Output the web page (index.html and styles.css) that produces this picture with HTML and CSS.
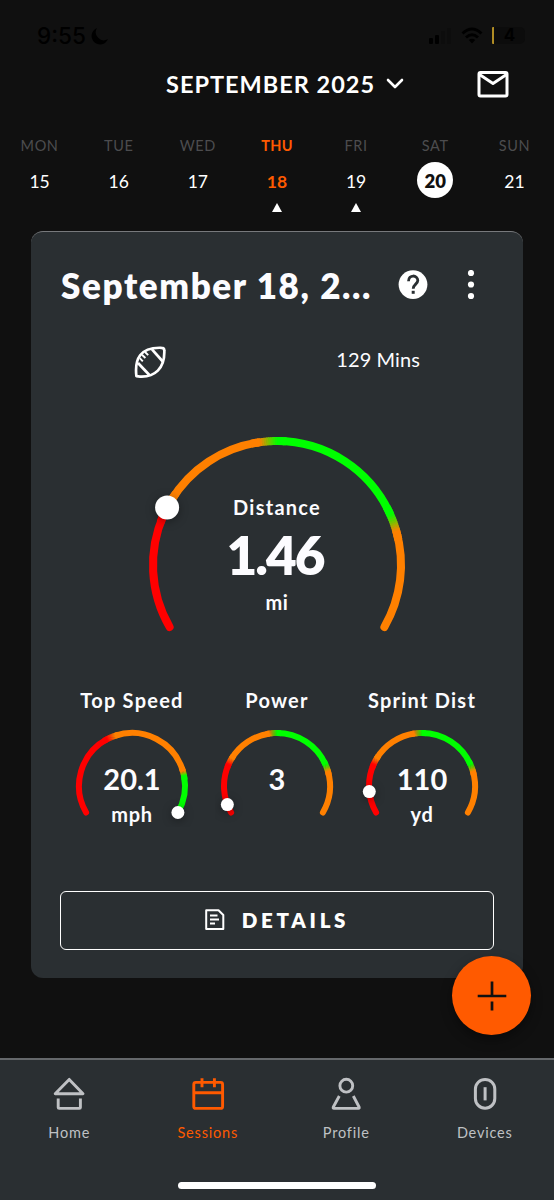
FILE: index.html
```html
<!DOCTYPE html>
<html lang="en">
<head>
    <meta charset="UTF-8">
    <meta name="viewport" content="width=device-width, initial-scale=1.0">
    <title>Sessions</title>
    <link rel="stylesheet" href="styles.css">
</head>
<body>
    <div class="status">
        <div class="status_time">
            <span>9:55</span>
            <svg width="18" height="18" viewBox="0 0 18 18"><path d="M6 1 A8.5 8.5 0 1 0 17 12 A8 8 0 0 1 6 1Z" fill="#000"/></svg>
        </div>
        <div class="status_icons">
            <svg width="24" height="18" viewBox="0 0 24 18">
                <rect x="1" y="11" width="4" height="6" rx="1" fill="#000"/>
                <rect x="7" y="8" width="4" height="9" rx="1" fill="#000"/>
                <rect x="13" y="4" width="4" height="13" rx="1" fill="#0d0d0d"/>
                <rect x="19" y="1" width="4" height="16" rx="1" fill="#0d0d0d"/>
            </svg>
            <svg width="22" height="17" viewBox="0 0 22 17" fill="none" stroke="#000" stroke-width="3">
                <path d="M1.5 6.5 Q11 -2.5 20.5 6.5"/>
                <path d="M5 10.5 Q11 5 17 10.5"/>
                <path d="M11 16.5 L7.8 13 Q11 10.5 14.2 13Z" fill="#000" stroke="none"/>
            </svg>
            <div class="battery">4</div>
        </div>
    </div>

    <div class="top">
        <div class="month">
            <span>SEPTEMBER 2025</span>
            <svg width="18" height="12" viewBox="0 0 18 12" fill="none" stroke="#fff" stroke-width="2.6" stroke-linecap="round" stroke-linejoin="round"><path d="M2 2 L9 9 L16 2"/></svg>
        </div>
        <svg class="mail" width="32" height="28" viewBox="0 0 32 28" fill="none" stroke="#fff" stroke-width="3" stroke-linejoin="round">
            <rect x="2" y="2.5" width="28" height="23.5" rx="1.5"/>
            <path d="M2.5 4.5 L16 13.5 L29.5 4.5"/>
        </svg>
    </div>

    <div class="week">
        <div class="day"><span class="name">MON</span><span class="num">15</span></div>
        <div class="day"><span class="name">TUE</span><span class="num">16</span></div>
        <div class="day"><span class="name">WED</span><span class="num">17</span></div>
        <div class="day on"><span class="name">THU</span><span class="num">18</span><i class="mark"></i></div>
        <div class="day"><span class="name">FRI</span><span class="num">19</span><i class="mark"></i></div>
        <div class="day today"><span class="name">SAT</span><span class="num">20</span></div>
        <div class="day"><span class="name">SUN</span><span class="num">21</span></div>
    </div>

    <div class="card">
        <div class="card_head">
            <h1 class="title">September 18, 2...</h1>
            <svg class="help" width="30" height="30" viewBox="0 0 30 30">
                <circle cx="15" cy="14.6" r="14.4" fill="#fff"/>
                <path d="M10.5 11.2 C10.5 4.2 19.8 4.6 19.8 10.6 C19.8 14 15.2 14.4 15.2 18.8" fill="none" stroke="#2a2f32" stroke-width="2.8"/>
                <rect x="13.7" y="20.8" width="3" height="3" fill="#2a2f32"/>
            </svg>
            <svg class="more" width="8" height="30" viewBox="0 0 8 30" fill="#fff">
                <circle cx="4" cy="3" r="3.1"/><circle cx="4" cy="14.5" r="3.1"/><circle cx="4" cy="26" r="3.1"/>
            </svg>
        </div>

        <div class="info">
            <svg width="32" height="32" viewBox="0 0 32 32" fill="none" stroke="#fff" stroke-width="2.7" stroke-linejoin="round">
                <path d="M2.4 30.2 C0.4 13 6 1 27.5 1.8 Q30.3 1.8 30.3 4.4 C31 22 21 32 4.2 30.4Z"/>
                <path d="M4 17 L15.6 29.2"/>
                <path d="M18 3.4 L29.2 16"/>
                <path d="M5.8 12.2 L8.8 15.4 M8 8.8 L11.4 12 M11 6 L14.2 9.2" stroke-width="1.9"/>
            </svg>
            <span class="mins">129 Mins</span>
        </div>

        <div class="gauge big">
            <svg width="264" height="212" data-r="124" data-w="8" data-knob="12" data-pos="57.6" data-type="mid"></svg>
            <div class="gauge_text">
                <span class="label">Distance</span>
                <span class="value">1.46</span>
                <span class="unit">mi</span>
            </div>
        </div>

        <div class="smalls">
            <div class="small">
                <span class="label">Top Speed</span>
                <div class="gauge">
                    <svg width="124" height="102" data-r="53" data-w="6" data-knob="6.5" data-pos="240" data-type="speed"></svg>
                    <div class="gauge_text"><span class="value">20.1</span><span class="unit">mph</span></div>
                </div>
            </div>
            <div class="small">
                <span class="label">Power</span>
                <div class="gauge">
                    <svg width="124" height="102" data-r="53" data-w="6" data-knob="6.5" data-pos="9.5" data-type="mid"></svg>
                    <div class="gauge_text"><span class="value">3</span></div>
                </div>
            </div>
            <div class="small">
                <span class="label">Sprint Dist</span>
                <div class="gauge">
                    <svg width="124" height="102" data-r="53" data-w="6" data-knob="6.5" data-pos="24" data-type="mid"></svg>
                    <div class="gauge_text"><span class="value">110</span><span class="unit">yd</span></div>
                </div>
            </div>
        </div>

        <button class="details">
            <svg width="20" height="22" viewBox="0 0 20 22" fill="none" stroke="#fff" stroke-width="2">
                <path d="M1.2 1.2 H13.5 L18.3 6 V20 H1.2Z" stroke-linejoin="round"/>
                <path d="M5 6.5 H12.5 M5 10.5 H14 M5 14.5 H10"/>
            </svg>
            <span>DETAILS</span>
        </button>
    </div>

    <div class="fab">
        <svg width="30" height="30" viewBox="0 0 30 30" stroke="#111" stroke-width="2.7"><path d="M0.7 15 H29.3 M15 0.6 V15 M15 20.4 V29.4"/></svg>
    </div>

    <div class="nav">
        <div class="tab">
            <svg width="34" height="34" viewBox="0 0 34 34" fill="none" stroke="#bfc1c4" stroke-width="2.9" stroke-linejoin="round">
                <path d="M17.2 3.4 L31 17.8 H3.2Z"/>
                <path d="M6.2 22.4 V31.4 Q6.2 32.4 7.2 32.4 H27.4 Q28.4 32.4 28.4 31.4 V22.4"/>
            </svg>
            <span>Home</span>
        </div>
        <div class="tab active">
            <svg width="34" height="34" viewBox="0 0 34 34" fill="none" stroke="#ff5a00" stroke-width="2.9">
                <rect x="2.8" y="6.4" width="28.8" height="26" rx="2"/>
                <path d="M3 16.8 H31.4 M11 2.2 V11.2 M23.4 2.2 V11.2"/>
            </svg>
            <span>Sessions</span>
        </div>
        <div class="tab">
            <svg width="34" height="34" viewBox="0 0 34 34" fill="none" stroke="#bfc1c4" stroke-width="2.9" stroke-linejoin="round">
                <circle cx="17.3" cy="9.7" r="6.4"/>
                <path d="M10.3 20 L4.3 31 Q3.8 32.4 5 32.4 H29.4 Q30.6 32.4 30.1 31 L24.3 20"/>
            </svg>
            <span>Profile</span>
        </div>
        <div class="tab">
            <svg width="34" height="34" viewBox="0 0 34 34" fill="none" stroke="#bfc1c4" stroke-width="3">
                <rect x="7.4" y="3.4" width="19.4" height="28.8" rx="9.7"/>
                <path d="M17.1 11.2 V24.4"/>
            </svg>
            <span>Devices</span>
        </div>
        <div class="homebar"></div>
    </div>
    <script src="script.js"></script>
</body>
</html>
```
FILE: styles.css
```css
*
{
    box-sizing: border-box;
}
body
{
    margin: 0;
    width: 554px;
    height: 1200px;
    overflow: hidden;
    position: relative;
    display: flex;
    flex-direction: column;
    background-color: #101010;
    color: #fff;
    font-family: Lato, "Liberation Sans", sans-serif;
}
svg
{
    display: block;
    flex: none;
}

/* status bar */
.status
{
    height: 60px;
    padding: 11px 29px 0 37px;
    display: flex;
    justify-content: space-between;
    align-items: center;
    color: #000;
    font-family: Inter, sans-serif;
    font-weight: 500;
}
.status_time
{
    display: flex;
    align-items: center;
    gap: 5px;
    font-size: 22.5px;
}
.status_icons
{
    display: flex;
    align-items: center;
    gap: 9px;
}
.battery
{
    width: 33px;
    height: 17px;
    border-left: 2px solid #b08c24;
    border-radius: 1px 5px 5px 1px;
    background-color: #0c0c0c;
    font-size: 17px;
    font-weight: 700;
    line-height: 17px;
    text-align: center;
}

/* month */
.top
{
    height: 48px;
    padding: 0 45px 0 166px;
    display: flex;
    justify-content: space-between;
    align-items: center;
}
.month
{
    display: flex;
    align-items: center;
    gap: 11px;
    font-size: 23.5px;
    font-weight: 700;
    letter-spacing: 1px;
    white-space: nowrap;
}
.month span
{
    margin-top: -1px;
}

/* week */
.week
{
    height: 123px;
    padding-top: 29px;
    display: grid;
    grid-template-columns: repeat(7, 1fr);
}
.day
{
    display: flex;
    flex-direction: column;
    align-items: center;
}
.name
{
    height: 18px;
    line-height: 18px;
    font-size: 14.5px;
    letter-spacing: 0.6px;
    color: #4c4c4e;
}
.num
{
    width: 36px;
    height: 36px;
    margin-top: 7px;
    border-radius: 50%;
    font-size: 17.5px;
    line-height: 39px;
    text-align: center;
}
.on .name, .on .num
{
    color: #ff5a00;
    font-weight: 700;
}
.on .name
{
    letter-spacing: 0.2px;
}
.today .num
{
    background-color: #fff;
    color: #101010;
    font-weight: 800;
    font-size: 18.5px;
}
.mark
{
    margin-top: 5px;
    border-left: 5.5px solid transparent;
    border-right: 5.5px solid transparent;
    border-bottom: 9px solid #fff;
}

/* session card */
.card
{
    width: 492px;
    height: 747px;
    margin-left: 31px;
    padding: 0 29px;
    border-top: 1px solid #77797c;
    border-radius: 12px;
    background-color: #2a2f32;
    display: flex;
    flex-direction: column;
    color: #fcfcff;
}
.card_head
{
    height: 106px;
    padding-right: 19px;
    display: flex;
    align-items: center;
}
.title
{
    width: 338px;
    margin: 0;
    padding-left: 1px;
    font-size: 35px;
    font-weight: 800;
    letter-spacing: 1.6px;
    white-space: nowrap;
}
.more
{
    margin-left: auto;
}
.info
{
    height: 48px;
    padding: 0 74px;
    display: flex;
    justify-content: space-between;
    align-items: center;
}
.mins
{
    margin-top: -6px;
    font-size: 20px;
    letter-spacing: 0.1px;
}
.gauge
{
    display: grid;
    justify-items: center;
}
.gauge svg, .gauge_text
{
    grid-area: 1 / 1;
}
.gauge_text
{
    display: flex;
    flex-direction: column;
    align-items: center;
}
.label, .unit
{
    font-size: 20px;
    font-weight: 700;
    line-height: 24px;
    letter-spacing: 1.25px;
}
.unit
{
    letter-spacing: 0.7px;
}
.big
{
    margin-top: 46px;
}
.big .gauge_text
{
    padding-top: 63px;
}
.big .value
{
    padding-right: 4px;
    font-size: 53px;
    font-weight: 800;
    line-height: 71px;
    letter-spacing: -2px;
}
.smalls
{
    margin: 44px 0 0 0;
    display: flex;
    justify-content: space-between;
}
.small
{
    width: 144px;
    display: flex;
    flex-direction: column;
    align-items: center;
}
.small .gauge
{
    margin-top: 13px;
}
.small .gauge_text
{
    padding-top: 35px;
}
.small .value
{
    font-size: 29px;
    font-weight: 700;
    line-height: 38px;
}
.small .unit
{
    line-height: 32px;
}
.details
{
    width: 434px;
    height: 59px;
    margin-top: 61px;
    padding: 0 5px 1px 5px;
    border: 1.5px solid #fff;
    border-radius: 6px;
    background: none;
    display: flex;
    justify-content: center;
    align-items: center;
    gap: 17px;
    color: #fff;
    font-family: inherit;
    font-size: 20.5px;
    font-weight: 800;
    letter-spacing: 3.7px;
}

/* floating add button */
.fab
{
    position: absolute;
    left: 452px;
    top: 956px;
    width: 79px;
    height: 79px;
    border-radius: 50%;
    background-color: #ff5a00;
    box-shadow: 0 5px 12px rgba(0, 0, 0, 0.4);
    display: flex;
    justify-content: center;
    align-items: center;
}

/* bottom tabs */
.nav
{
    height: 142px;
    margin-top: auto;
    padding-top: 16px;
    border-top: 2px solid #65686b;
    background-color: #2a2f32;
    display: grid;
    grid-template-columns: repeat(4, 1fr);
    grid-template-rows: 106px 7px;
}
.tab
{
    display: flex;
    flex-direction: column;
    align-items: center;
    gap: 14px;
    color: #bfc1c4;
    font-size: 14.5px;
    letter-spacing: 0.8px;
}
.tab span
{
    line-height: 18px;
}
.active
{
    color: #ff5a00;
}
.homebar
{
    grid-column: 1 / 5;
    justify-self: center;
    width: 198px;
    height: 7px;
    border-radius: 4px;
    background-color: #fff;
}
```
FILE: script.js
```js
// colours of the scale: [degree, [r, g, b]], 0 = left end, 240 = right end
const RED = [255, 0, 0], ORANGE = [255, 128, 0], GREEN = [0, 255, 0];
const scales = {
    mid: [[0, RED], [54, RED], [61, ORANGE], [112, ORANGE], [120, GREEN], [186, GREEN], [194, ORANGE], [240, ORANGE]],
    speed: [[0, RED], [92, RED], [101, ORANGE], [194, ORANGE], [199, GREEN], [240, GREEN]]
};

function point(cx, cy, r, deg){
    let a = (150 + deg) * Math.PI / 180;
    return [(cx + r * Math.cos(a)).toFixed(2), (cy + r * Math.sin(a)).toFixed(2)];
}

function arc(cx, cy, r, w, from, to, color, cap){
    let p = point(cx, cy, r, from), q = point(cx, cy, r, to);
    return `<path d="M${p} A${r} ${r} 0 0 1 ${q}" fill="none" stroke="rgb(${color})" stroke-width="${w}" stroke-linecap="${cap}"/>`;
}

function drawGauge(svg){
    let r = +svg.dataset.r, w = +svg.dataset.w;
    let cx = svg.getAttribute("width") / 2;
    let cy = r + w / 2 + 5;
    let stops = scales[svg.dataset.type];
    let out = "";
    for(let i = 0; i < stops.length - 1; i++){
        let [a, c1] = stops[i], [b, c2] = stops[i + 1];
        if(c1 == c2){
            out += arc(cx, cy, r, w, a, b, c1, a == 0 || b == 240 ? "round" : "butt");
        }
    }
    for(let i = 0; i < stops.length - 1; i++){
        let [a, c1] = stops[i], [b, c2] = stops[i + 1];
        if(c1 == c2) continue;
        // blend one degree at a time
        for(let d = a - 4; d < b + 4; d++){
            let t = Math.min(1, Math.max(0, (d + 0.5 - a) / (b - a)));
            let c = c1.map((v, k) => Math.round(v + (c2[k] - v) * t));
            out += arc(cx, cy, r, w, d, d + 1.3, c, "butt");
        }
    }
    let k = point(cx, cy, r, +svg.dataset.pos);
    out += `<circle cx="${k[0]}" cy="${k[1]}" r="${svg.dataset.knob}" fill="#fff" style="filter:drop-shadow(0 2px 5px rgba(0,0,0,0.35))"/>`;
    svg.innerHTML = out;
}

document.querySelectorAll("svg[data-r]").forEach(drawGauge);
```
